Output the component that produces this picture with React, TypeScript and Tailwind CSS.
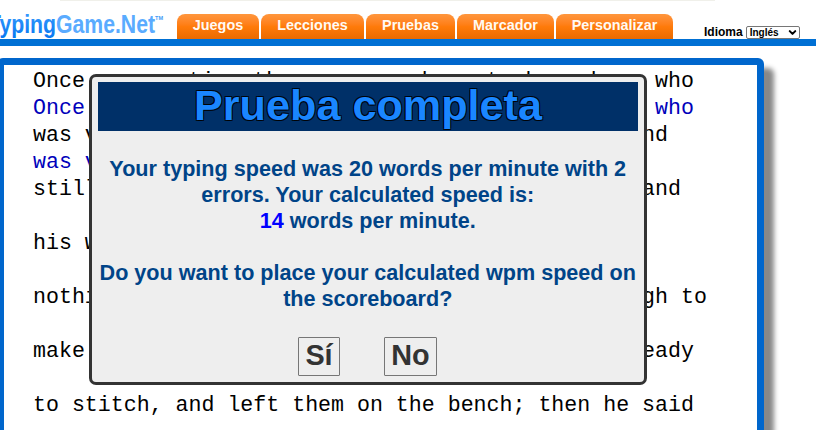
import { ChevronDown } from "lucide-react";

const tabs = [
  { label: "Juegos", width: "w-[82px]" },
  { label: "Lecciones", width: "w-[103px]" },
  { label: "Pruebas", width: "w-[89px]" },
  { label: "Marcador", width: "w-[97px]" },
  { label: "Personalizar", width: "w-[117px]" },
];

// typed lines repeat the source line in blue
const lines = [
  { text: "Once upon a time there was an honest shoemaker, who" },
  { text: "Once upon a time there was an honest shoemaker, who", typed: true },
  { text: "was very poor. He worked as hard as he could, and" },
  { text: "was very", typed: true },
  { text: "still he could not earn enough to keep himself and" },
  { text: "" },
  { text: "his wife." },
  { text: "" },
  { text: "nothing was left in the house save leather enough to" },
  { text: "" },
  { text: "make one pair of shoes. He cut these out, all ready" },
  { text: "" },
  { text: "to stitch, and left them on the bench; then he said" },
];

function Logo() {
  return (
    <svg width="177" height="38" viewBox="0 0 177 38" className="shrink-0 font-bold">
      <defs>
        <linearGradient id="typing" x1="0" y1="0" x2="0" y2="1">
          <stop offset="0" stopColor="#3a9cff" />
          <stop offset="1" stopColor="#0878f0" />
        </linearGradient>
      </defs>
      <text x="-12" y="32" fontSize="25" textLength="68" lengthAdjust="spacingAndGlyphs" fill="url(#typing)">
        Typing
      </text>
      <text x="56" y="32" fontSize="25" textLength="99" lengthAdjust="spacingAndGlyphs" fill="#5aabff">
        Game.Net
      </text>
      <text x="155" y="19" fontSize="6" textLength="8" lengthAdjust="spacingAndGlyphs" fill="#3f9bf5">
        TM
      </text>
    </svg>
  );
}

function Header() {
  return (
    <header className="flex h-[46px] items-end border-b-[7px] border-[#0070d4]">
      <Logo />
      <nav className="flex gap-[2px]">
        {tabs.map((tab) => (
          <button
            key={tab.label}
            className={`${tab.width} h-[25px] rounded-t-[8px] bg-linear-to-b from-[#ff963c] via-[#ff7b0a] to-[#e96a00] pb-[2px] text-[14.4px] leading-[23px] font-bold text-[#fffaf4]`}
          >
            {tab.label}
          </button>
        ))}
      </nav>
      <div className="ml-[31px] flex items-end gap-[3px]">
        <span className="text-[12px] leading-[14px] font-bold">Idioma</span>
        <button className="flex h-[13px] w-[54px] items-center justify-between rounded-[2px] border border-[#767676] bg-white pr-px pl-[3px] text-[10px] font-bold leading-[11px]">
          Inglés
          <ChevronDown size={11} strokeWidth={4.5} />
        </button>
      </div>
    </header>
  );
}

function ResultDialog() {
  return (
    <div className="absolute top-[74px] left-[89px] h-[311px] w-[558px] rounded-[7px] border-[3px] border-[#333] bg-[#eee] px-[6px] pt-[5px] text-center font-bold">
      <h1 className="h-[49px] bg-[#003068] text-[43.2px] leading-[46px] text-[#1a86ff] [text-shadow:-1px_-1px_0_#000c,1px_-1px_0_#000c,-1px_1px_0_#000c,1px_1px_0_#000c]">
        Prueba completa
      </h1>
      <p className="mt-[25px] pr-[0.5px] text-[21.6px] leading-[26px] whitespace-nowrap text-[#004488]">
        Your typing speed was 20 words per minute with 2
        <br />
        errors. Your calculated speed is:
        <br />
        <span className="text-[#0000ff]">14</span> words per minute.
        <br />
        <br />
        Do you want to place your calculated wpm speed on
        <br />
        the scoreboard?
      </p>
      <div className="mt-[25px] flex justify-center gap-[44px] pr-[2px] text-[28.8px] leading-[33px] text-[#333]">
        <button className="h-[39px] w-[42px] rounded-[1px] border border-[#767676] pb-[2px] pl-px">Sí</button>
        <button className="h-[39px] w-[53px] rounded-[1px] border border-[#767676] pb-[2px] pl-px">No</button>
      </div>
    </div>
  );
}

export default function App() {
  return (
    <div className="relative h-[430px] w-[816px] overflow-hidden bg-white font-['Liberation_Sans',Arial,sans-serif] text-black">
      <div className="absolute top-0 left-[60px] h-px w-[655px] bg-[#f0f0ea]" />
      <Header />
      <main className="mt-[12px] -ml-[3px] h-[500px] w-[767px] rounded-[6px] border-[7px] border-[#0066cc] bg-white pt-[3px] pl-[29px] font-['Liberation_Mono',monospace] text-[21.6px] leading-[27px] shadow-[10px_10px_5px_#888]">
        {lines.map((line, i) => (
          <div key={i} className={`h-[27px] whitespace-pre ${line.typed ? "text-[#0000bb]" : ""}`}>
            {line.text}
          </div>
        ))}
      </main>
      <ResultDialog />
    </div>
  );
}
